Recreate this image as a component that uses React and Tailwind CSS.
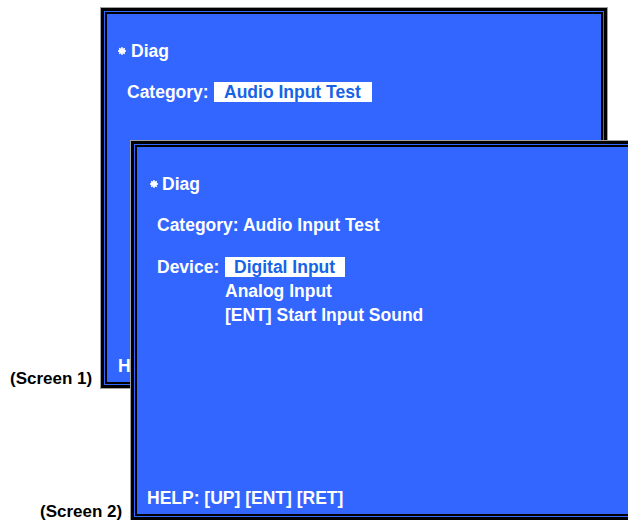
import React from "react";

const font = { fontFamily: '"Liberation Sans", Arial, sans-serif' };

function Star() {
  return (
    <svg width="8" height="8" viewBox="0 0 8 8" className="shrink-0">
      <g stroke="white" strokeWidth="1.8" strokeLinecap="round">
        <line x1="4" y1="0.9" x2="4" y2="7.1" />
        <line x1="0.9" y1="4" x2="7.1" y2="4" />
        <line x1="1.8" y1="1.8" x2="6.2" y2="6.2" />
        <line x1="6.2" y1="1.8" x2="1.8" y2="6.2" />
      </g>
    </svg>
  );
}

function Frame({ className, children }) {
  return (
    <div className={"absolute border border-[#a0a0a0] " + className}>
      <div className="h-full w-full border-[3px] border-black">
        <div className="h-full w-full border border-[#3366ff]">
          <div className="flex h-full w-full flex-col border-2 border-black bg-[#3366ff] text-white">
            {children}
          </div>
        </div>
      </div>
    </div>
  );
}

function Diag({ starPad, gap }) {
  return (
    <div className={"flex h-[24px] items-center " + starPad}>
      <Star />
      <span className={gap}>Diag</span>
    </div>
  );
}

export default function App() {
  return (
    <div
      className="relative h-[520px] w-[628px] overflow-hidden bg-white text-[17.5px] font-bold leading-[24px]"
      style={font}
    >
      <div className="absolute left-[10px] top-[371px] text-[17px] leading-[16px] text-black">(Screen 1)</div>
      <div className="absolute left-[40px] top-[504px] text-[17px] leading-[16px] text-black">(Screen 2)</div>

      <Frame className="left-[100px] top-[7px] h-[382px] w-[508px]">
        <div className="flex h-full flex-col pl-[20px] pt-[25px] pb-[4px]">
          <Diag starPad="-ml-[9px]" gap="ml-[5px]" />
          <div className="mt-[17px] flex h-[24px] items-center">
            <span className="w-[87px] shrink-0">Category:</span>
            <span className="flex h-[20px] items-center bg-white pl-[10px] pr-[11px] text-[#1763e6]">
              Audio Input Test
            </span>
          </div>
          <div className="mt-auto flex h-[24px] items-center -ml-[9px]">HELP: [UP] [ENT] [RET]</div>
        </div>
      </Frame>

      <Frame className="left-[130px] top-[140px] h-[381px] w-[520px]">
        <div className="flex h-full flex-col pl-[20px] pt-[25px] pb-[4px]">
          <Diag starPad="-ml-[7px]" gap="ml-[4px]" />
          <div className="mt-[17px] flex h-[24px] items-center">Category: Audio Input Test</div>
          <div className="mt-[18px] flex">
            <span className="flex h-[24px] w-[68px] shrink-0 items-center">Device:</span>
            <div className="flex flex-col">
              <div className="flex h-[24px] items-center">
                <span className="flex h-[20px] items-center bg-white pl-[9px] pr-[10px] text-[#1763e6]">
                  Digital Input
                </span>
              </div>
              <div className="flex h-[24px] items-center">Analog Input</div>
              <div className="flex h-[24px] items-center">[ENT] Start Input Sound</div>
            </div>
          </div>
          <div className="mt-auto flex h-[24px] items-center -ml-[10px]">HELP: [UP] [ENT] [RET]</div>
        </div>
      </Frame>
    </div>
  );
}
